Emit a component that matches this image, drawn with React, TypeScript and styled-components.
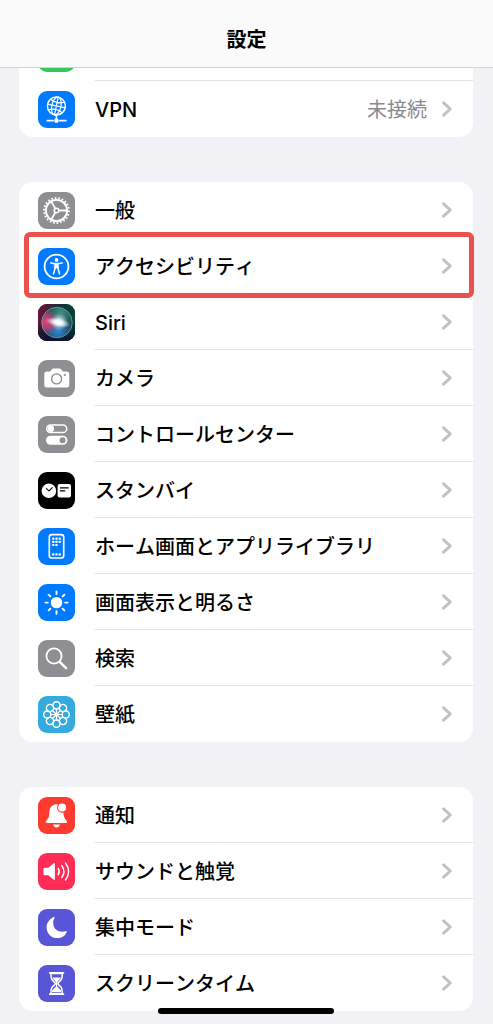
import React from 'react';
import styled, { createGlobalStyle } from 'styled-components';

const GlobalStyle = createGlobalStyle`
  *, *::before, *::after { box-sizing: border-box; }
  body {
    margin: 0;
    background: #f2f1f6;
    color: #000;
    font-family: Inter, "Noto Sans CJK JP", sans-serif;
    font-size: 20px;
    font-kerning: none;
    line-height: 28px;
  }
`;

const Screen = styled.div`
  position: relative;
  padding-bottom: 13px;
`;

const Header = styled.header`
  display: flex;
  justify-content: center;
  padding: 26px 20px 13px;
  background: #f9faf9;
  border-bottom: 1px solid #d2d2d4;
`;

const Title = styled.h1`
  margin: 0;
  font-size: 20px;
  font-weight: 700;
  line-height: 28px;
`;

const Groups = styled.main`
  display: flex;
  flex-direction: column;
  gap: 45px;
  padding: 0 20px 0 19px;
`;

const Group = styled.ul<{ $continued?: boolean }>`
  list-style: none;
  margin: 0;
  padding: 0;
  background: #fff;
  border-radius: ${(p) => (p.$continued ? '0 0 14px 14px' : '14px')};
`;

const Item = styled.li<{ $highlighted?: boolean }>`
  position: relative;

  ${(p) =>
    p.$highlighted &&
    `&::after {
      content: '';
      position: absolute;
      z-index: 1;
      inset: -6px -1px -4px 5px;
      border: 5px solid #ea514d;
      border-radius: 6px;
      pointer-events: none;
    }`}
`;

const RowLink = styled.a`
  display: flex;
  align-items: center;
  gap: 20px;
  height: 56px;
  padding-left: 19px;
  color: inherit;
  text-decoration: none;
`;

const RowBody = styled.span<{ $divided: boolean }>`
  flex: 1;
  align-self: stretch;
  display: flex;
  align-items: center;
  gap: 14px;
  padding-right: 20px;
  border-bottom: 1px solid ${(p) => (p.$divided ? '#e1e1e3' : 'transparent')};
`;

const Label = styled.span`
  flex: 1;
  padding-top: 2px;
  font-weight: 500;
`;

const Value = styled.span`
  padding-top: 2px;
  color: #8b8b8e;
`;

const ScrolledItem = styled.li`
  display: flex;
  align-items: flex-end;
  gap: 20px;
  height: 13px;
  padding-left: 19px;
  overflow: hidden;
`;

const ScrolledBody = styled.span`
  flex: 1;
  border-bottom: 1px solid #e1e1e3;
`;

const Tile = styled.span<{ $color: string; $scrolled?: boolean }>`
  flex: none;
  display: block;
  width: 37px;
  height: 37px;
  margin-bottom: ${(p) => (p.$scrolled ? '9px' : '0')};
  border-radius: 9px;
  background: ${(p) => p.$color};
  overflow: hidden;
`;

const Glyph = styled.svg`
  display: block;
  width: 37px;
  height: 37px;
`;

const HomeIndicator = styled.div`
  position: absolute;
  bottom: 10px;
  left: 50%;
  width: 176px;
  height: 6px;
  margin-left: -89px;
  border-radius: 3px;
  background: #000;
`;

const Chevron = () => (
  <svg width="12" height="18" viewBox="0 0 12 18" fill="none" aria-hidden="true">
    <path d="M2.6 2.8 9.3 9l-6.7 6.2" stroke="#c2c2c4" strokeWidth="3" strokeLinecap="round" strokeLinejoin="round" />
  </svg>
);

const stroke = { fill: 'none', stroke: '#fff', strokeLinecap: 'round', strokeLinejoin: 'round' } as const;

const VpnGlyph = () => (
  <g {...stroke} strokeWidth="1.2">
    <circle cx="18.4" cy="15" r="9" strokeWidth="1.5" />
    <g transform="rotate(12 18.4 15)">
      <path d="M18.4 6v18M9.4 15h18M11.4 9.6q7 3.6 14 0M11.4 20.4q7-3.6 14 0" />
      <ellipse cx="18.4" cy="15" rx="4.6" ry="9" />
    </g>
    <path d="M18.4 24v4" strokeWidth="1.6" />
    <path d="M9.2 29.6h6M21.6 29.6h6.2" strokeWidth="1.8" />
    <rect x="16.4" y="27.6" width="4.1" height="4.1" rx="1.3" fill="#fff" stroke="none" />
  </g>
);

const GearGlyph = () => (
  <g {...stroke} strokeWidth="1.8">
    <circle cx="18.5" cy="18.5" r="10.6" />
    <circle cx="18.5" cy="18.5" r="12.4" pathLength="88" strokeWidth="2" strokeLinecap="butt" strokeDasharray="1.9 2.1" />
    <circle cx="18.5" cy="18.5" r="2.3" strokeWidth="1.5" />
    <path d="M21 18.5h8M17.2 16.4l-4-7M17.2 20.6l-4 7" />
  </g>
);

const AccessibilityGlyph = () => (
  <g {...stroke}>
    <circle cx="18.5" cy="18.5" r="11.9" strokeWidth="1.8" />
    <circle cx="18.5" cy="11.9" r="1.9" fill="#fff" stroke="none" />
    <path d="M12.7 14.9q5.8 1.7 11.6 0" strokeWidth="1.5" />
    <path d="M16.6 15.2h3.8v4.8h-3.8z" fill="#fff" strokeWidth=".6" />
    <path d="m17.3 19.4-1.8 6.4M19.7 19.4l1.8 6.4" strokeWidth="1.6" />
  </g>
);

const SiriGlyph = () => (
  <>
    <defs>
      <linearGradient id="siriBack" x1="0" y1="0" x2="1" y2="0.2">
        <stop offset="0" stopColor="#7a1038" />
        <stop offset=".5" stopColor="#1c2a30" />
        <stop offset="1" stopColor="#04443a" />
      </linearGradient>
      <linearGradient id="siriFade" x1="0" y1="0" x2="0" y2="1">
        <stop offset=".45" stopColor="#0d1334" stopOpacity="0" />
        <stop offset="1" stopColor="#0d1334" />
      </linearGradient>
      <radialGradient id="siriPink" cx="8" cy="18" r="13" gradientUnits="userSpaceOnUse">
        <stop offset="0" stopColor="#e23f7e" />
        <stop offset=".5" stopColor="#c93f7c" stopOpacity=".8" />
        <stop offset="1" stopColor="#c93f7c" stopOpacity="0" />
      </radialGradient>
      <radialGradient id="siriGreen" cx="23" cy="9" r="15" gradientUnits="userSpaceOnUse">
        <stop offset="0" stopColor="#3a9180" />
        <stop offset="1" stopColor="#3a9180" stopOpacity="0" />
      </radialGradient>
      <radialGradient id="siriBlue" cx="20" cy="27" r="14" gradientUnits="userSpaceOnUse">
        <stop offset="0" stopColor="#2f86dc" />
        <stop offset="1" stopColor="#2f86dc" stopOpacity="0" />
      </radialGradient>
      <radialGradient id="siriWhite" cx=".5" cy=".5" r=".5">
        <stop offset="0" stopColor="#fff" />
        <stop offset=".3" stopColor="#fff" stopOpacity=".9" />
        <stop offset="1" stopColor="#cfeef5" stopOpacity="0" />
      </radialGradient>
    </defs>
    <rect width="37" height="37" fill="url(#siriBack)" />
    <rect width="37" height="37" fill="url(#siriFade)" />
    <circle cx="19" cy="18.5" r="15.3" fill="#1f4650" />
    <circle cx="19" cy="18.5" r="15.3" fill="url(#siriGreen)" />
    <circle cx="19" cy="18.5" r="15.3" fill="url(#siriBlue)" />
    <circle cx="19" cy="18.5" r="15.3" fill="url(#siriPink)" />
    <ellipse cx="20" cy="18.5" rx="13" ry="4.5" transform="rotate(12 20 18.5)" fill="url(#siriWhite)" />
    <circle cx="21" cy="18" r="9" fill="url(#siriWhite)" opacity=".8" />
    <circle cx="19" cy="18.5" r="15.3" fill="none" stroke="#7bb0a7" strokeOpacity=".8" strokeWidth=".9" />
  </>
);

const CameraGlyph = () => (
  <>
    <path
      d="M8.8 11.400h3.400l1.700-2.100q.6-.7 1.500-.7h6.300q.9 0 1.500.7l1.700 2.100h3.900q2.500 0 2.500 2.500v11q0 2.500-2.500 2.500h-20q-2.500 0-2.500-2.500v-11q0-2.500 2.500-2.500z"
      fill="#fff"
    />
    <circle cx="18.6" cy="18.9" r="5" fill="none" stroke="#8e8e93" strokeWidth="1.4" />
    <circle cx="26.8" cy="15" r="1.100" fill="#8e8e93" />
  </>
);

const ControlGlyph = () => (
  <>
    <rect x="8.7" y="8.9" width="20" height="7.7" rx="3.85" fill="none" stroke="#fff" strokeWidth="1.5" />
    <circle cx="12.9" cy="12.75" r="3.2" fill="#fff" />
    <rect x="8" y="19.7" width="21.4" height="9" rx="4.5" fill="#fff" />
    <circle cx="24.6" cy="24.2" r="3" fill="#8e8e93" />
  </>
);

const StandbyGlyph = () => (
  <g strokeLinecap="round" strokeLinejoin="round">
    <circle cx="10.9" cy="18.8" r="7.3" fill="#fff" />
    <path d="m8.4 16.7 2.6 2.2 3.3-3.3" fill="none" stroke="#000" strokeWidth="1.1" />
    <rect x="19.6" y="12" width="13.4" height="13.6" rx="2" fill="#fff" />
    <path d="M22.4 15.9h7.8M22.4 18.9h4.4" stroke="#000" strokeWidth="1.1" />
  </g>
);

const HomeGlyph = () => (
  <>
    <rect x="11.3" y="6.6" width="14.4" height="23.4" rx="2.6" fill="none" stroke="#fff" strokeWidth="1.7" />
    <g fill="#fff">
      {[
        [14.2, 9.5], [17.4, 9.5], [20.6, 9.5],
        [14.2, 12.7], [17.4, 12.7], [20.6, 12.7],
        [14.2, 15.9], [17.4, 15.9],
        [14.2, 25.2], [17.4, 25.2], [20.6, 25.2],
      ].map(([x, y]) => (
        <rect key={`${x}-${y}`} x={x} y={y} width="2.2" height="2.2" rx=".5" />
      ))}
    </g>
  </>
);

const SunGlyph = () => (
  <g {...stroke} strokeWidth="1.9">
    <circle cx="18.5" cy="18.6" r="5.7" fill="#fff" stroke="none" />
    {[0, 45, 90, 135, 180, 225, 270, 315].map((a) => (
      <path key={a} d="M18.5 9.9V7.5" transform={`rotate(${a} 18.5 18.6)`} />
    ))}
  </g>
);

const SearchGlyph = () => (
  <g {...stroke}>
    <circle cx="16" cy="16" r="7.6" strokeWidth="1.8" />
    <path d="m21.7 21.8 6.4 6.3" strokeWidth="2.4" />
  </g>
);

const FlowerGlyph = () => (
  <g {...stroke} strokeWidth="1.5">
    {[0, 45, 90, 135, 180, 225, 270, 315].map((a) => (
      <g key={a} transform={`rotate(${a} 18.5 18.5)`}>
        <circle cx="18.5" cy="9.3" r="3.600" />
        <path d="M18.5 12.900v5" strokeWidth="1.200" />
      </g>
    ))}
    <circle cx="18.5" cy="18.5" r="2" fill="#fff" stroke="none" />
  </g>
);

const BellGlyph = () => (
  <>
    <path
      d="M18.400 7.200c-4.700.3-6.900 3.700-7 8-.1 4.200-.7 6-2.900 8.200-1.300 1.300-.9 2.500.6 2.500h18.700c1.500 0 1.800-1.200.6-2.500-2.200-2.200-2.900-4-3-8.200-.1-4.300-2.300-7.700-7-8z"
      fill="#fff"
    />
    <path d="M15.200 27.600h6.600q-.6 2.900-3.300 2.900t-3.300-2.900z" fill="#fff" />
    <circle cx="24.100" cy="10.600" r="5.100" fill="#ff3b30" />
    <circle cx="24.100" cy="10.600" r="4" fill="#fff" />
  </>
);

const SoundGlyph = () => (
  <g {...stroke} strokeWidth="1.5">
    <path
      d="M6.900 14.800h3.500l5-4.400q1.500-1.100 1.500.6v15q0 1.700-1.500.6l-5-4.400H6.900q-1.500 0-1.500-1.500v-4.400q0-1.500 1.500-1.500z"
      fill="#fff"
      stroke="none"
    />
    <path d="M20.200 15.400q2 3.100 0 6.200M23.800 12.600q4.200 5.900 0 11.800M27.500 10q6.200 8.500 0 17" />
  </g>
);

const MoonGlyph = () => (
  <path
    d="M15.800 7.900C11.600 9.600 8.600 13.700 8.600 18.400c0 6.100 4.800 10.700 10.800 10.700 4.200 0 7.900-2.400 9.400-6.200.2-.6-.2-1-.8-.8-1.200.5-2.400.7-3.800.7-5.600 0-9-3.500-9-9 0-1.800.5-3.300 1.300-4.800.3-.7-.1-1.300-.7-1.100z"
    fill="#fff"
  />
);

const HourglassGlyph = () => (
  <>
    <path
      d="M12.900 8.500h11.400c0 5-.6 6.500-3.700 8.800-.9.700-.9 1.800 0 2.500 3.100 2.300 3.700 3.900 3.700 8.900H12.900c0-5 .6-6.600 3.700-8.900.9-.7.9-1.800 0-2.500-3.100-2.300-3.700-3.800-3.700-8.800z"
      {...stroke}
      strokeWidth="1.5"
    />
    <path d="M11.800 7.900h13.600M11.800 29.200h13.600" {...stroke} strokeWidth="1.8" />
    <path
      d="M14.300 12.600h8.600c-.5 1.900-2.900 3-3.700 4.600v4.200l4 4.200v1.700h-9.200v-1.700l4-4.200v-4.200c-.8-1.600-3.200-2.700-3.700-4.600z"
      fill="#fff"
    />
  </>
);

type Entry = {
  label: string;
  color: string;
  glyph: React.ReactNode;
  value?: string;
  highlighted?: boolean;
};

const network: Entry[] = [{ label: 'VPN', color: '#007aff', glyph: <VpnGlyph />, value: '未接続' }];

const system: Entry[] = [
  { label: '一般', color: '#8e8e93', glyph: <GearGlyph /> },
  { label: 'アクセシビリティ', color: '#007aff', glyph: <AccessibilityGlyph />, highlighted: true },
  { label: 'Siri', color: '#17262e', glyph: <SiriGlyph /> },
  { label: 'カメラ', color: '#8e8e93', glyph: <CameraGlyph /> },
  { label: 'コントロールセンター', color: '#8e8e93', glyph: <ControlGlyph /> },
  { label: 'スタンバイ', color: '#000', glyph: <StandbyGlyph /> },
  { label: 'ホーム画面とアプリライブラリ', color: '#007aff', glyph: <HomeGlyph /> },
  { label: '画面表示と明るさ', color: '#007aff', glyph: <SunGlyph /> },
  { label: '検索', color: '#8e8e93', glyph: <SearchGlyph /> },
  { label: '壁紙', color: '#34aadf', glyph: <FlowerGlyph /> },
];

const attention: Entry[] = [
  { label: '通知', color: '#ff3b30', glyph: <BellGlyph /> },
  { label: 'サウンドと触覚', color: '#ff2d55', glyph: <SoundGlyph /> },
  { label: '集中モード', color: '#5856d6', glyph: <MoonGlyph /> },
  { label: 'スクリーンタイム', color: '#5856d6', glyph: <HourglassGlyph /> },
];

const Rows = ({ entries }: { entries: Entry[] }) => (
  <>
    {entries.map((e, i) => (
      <Item key={e.label} $highlighted={e.highlighted}>
        <RowLink href="#">
          <Tile $color={e.color}>
            <Glyph viewBox="0 0 37 37" aria-hidden="true">
              {e.glyph}
            </Glyph>
          </Tile>
          <RowBody $divided={i < entries.length - 1 && !entries[i + 1].highlighted}>
            <Label>{e.label}</Label>
            {e.value && <Value>{e.value}</Value>}
            <Chevron />
          </RowBody>
        </RowLink>
      </Item>
    ))}
  </>
);

export default function App() {
  return (
    <Screen>
      <GlobalStyle />
      <Header>
        <Title>設定</Title>
      </Header>
      <Groups>
        <Group $continued>
          <ScrolledItem aria-hidden="true">
            <Tile $color="#34c759" $scrolled />
            <ScrolledBody />
          </ScrolledItem>
          <Rows entries={network} />
        </Group>
        <Group>
          <Rows entries={system} />
        </Group>
        <Group>
          <Rows entries={attention} />
        </Group>
      </Groups>
      <HomeIndicator />
    </Screen>
  );
}
